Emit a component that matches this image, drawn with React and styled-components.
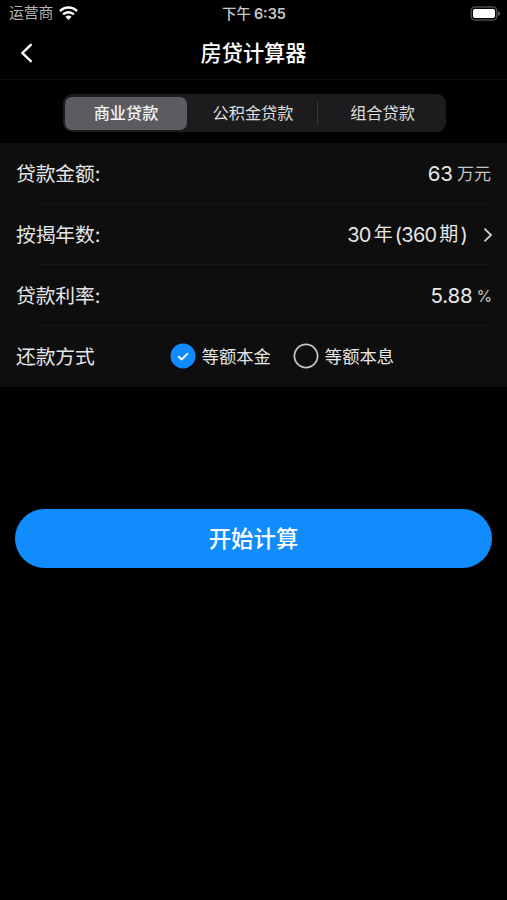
import React, { useState } from 'react'
import styled, { createGlobalStyle } from 'styled-components'

const GlobalStyle = createGlobalStyle`
  * {
    box-sizing: border-box;
  }

  body {
    margin: 0;
    background: #000;
    color: #e6e6e6;
    font-family: Inter, 'Noto Sans CJK SC', sans-serif;
  }

  button {
    margin: 0;
    padding: 0;
    border: none;
    background: none;
    color: inherit;
    font-family: inherit;
  }
`

const Screen = styled.div`
  height: 900px;
  background: #000;
  white-space: nowrap;
  overflow: hidden;
`

const StatusBar = styled.div`
  display: grid;
  grid-template-columns: 1fr auto 1fr;
  align-items: center;
  height: 27px;
  padding: 0 6px 0 9px;
`

const Carrier = styled.div`
  display: flex;
  align-items: center;
  gap: 6px;
  font-size: 14.8px;
  line-height: 27px;
  color: #b4b4b4;
`

const Clock = styled.div`
  display: flex;
  align-items: center;
  gap: 3px;
  margin-right: 2px;
  font-size: 14.4px;
  font-weight: 600;
  line-height: 27px;
  color: #c8c8c8;

  .period {
    font-weight: 500;
  }
`

const Battery = styled.svg`
  justify-self: end;
`

const NavBar = styled.div`
  display: grid;
  grid-template-columns: 1fr auto 1fr;
  align-items: center;
  height: 53px;
  padding: 0 20px;
  border-bottom: 1px solid #0d0d0d;
`

const BackButton = styled.button`
  display: flex;
  justify-self: start;
  padding-bottom: 1px;
`

const Title = styled.h1`
  margin: 0;
  font-size: 21.2px;
  font-weight: 500;
  line-height: 52px;
  color: #fff;
`

const Segments = styled.div`
  display: grid;
  grid-template-columns: 122px 129px 127px;
  justify-content: space-between;
  align-items: center;
  width: 383px;
  height: 38px;
  margin: 14px auto 11px 63px;
  padding: 2px 0 2px 2px;
  border-radius: 9px;
  background: #1c1c1e;
`

const Segment = styled.button`
  height: ${({ $active }) => ($active ? '33px' : '22px')};
  border-radius: ${({ $active }) => ($active ? '7px' : '0')};
  background: ${({ $active }) => ($active ? '#5b5b60' : 'transparent')};
  box-shadow: ${({ $divider }) => ($divider ? 'inset -1px 0 #39393b' : 'none')};
  color: ${({ $active }) => ($active ? '#f4f4f4' : '#dedede')};
  font-size: 16.2px;
  font-weight: ${({ $active }) => ($active ? 500 : 400)};
  line-height: 22px;
`

const Form = styled.div`
  background: #0e0e0e;
`

const Row = styled.div`
  display: flex;
  align-items: center;
  justify-content: space-between;
  height: 61px;
  padding: 0 16px 2px;

  &:not(:last-child) {
    background: linear-gradient(#171717, #171717) 36px 100% / 456px 1px no-repeat;
  }
`

const Label = styled.span`
  font-size: 19.8px;
  letter-spacing: -0.1px;
`

const Value = styled.div`
  display: flex;
  align-items: center;
  gap: 4px;
  font-size: 20.5px;
  line-height: 30px;
  padding-top: 3px;
`

const Term = styled(Value)`
  gap: 3px;
  font-size: 20px;
  letter-spacing: -0.8px;
`

const Rate = styled(Value)`
  margin-right: -1px;
  letter-spacing: -0.2px;
`

const Unit = styled.span`
  font-size: ${({ $size }) => $size || 17}px;
  line-height: 32px;
  color: ${({ $bright }) => ($bright ? '#e6e6e6' : '#c4c4c4')};
`

const Chevron = styled.svg`
  margin-left: 13px;
  margin-right: -2px;
`

const Options = styled.div`
  display: flex;
  gap: 22px;
  margin-right: 97px;
`

const Option = styled.button`
  display: flex;
  align-items: center;
  gap: 6px;
  font-size: 17.3px;
`

const Submit = styled.button`
  display: block;
  width: 477px;
  height: 59px;
  margin: 122px auto 0;
  padding-bottom: 3px;
  border-radius: 30px;
  background: #118cff;
  color: #fff;
  font-size: 22.4px;
  font-weight: 500;
`

const WifiIcon = () => (
  <svg width="19" height="15" viewBox="0 0 19 15" fill="none" stroke="#fff" strokeWidth="2.5">
    <path d="M1 5.1a12.1 12.1 0 0 1 17 0" />
    <path d="M4.1 8.4a7.7 7.7 0 0 1 10.8 0" />
    <path d="M6.4 10.8a4.4 4.4 0 0 1 6.2 0L9.5 14z" fill="#fff" stroke="none" />
  </svg>
)

const RadioIcon = ({ checked }) => (
  <svg width="26" height="26" viewBox="0 0 26 26" fill="none">
    {checked ? (
      <>
        <circle cx="13" cy="13" r="12.5" fill="#118cff" />
        <path d="M8.3 13.2l3.4 3.3 6.2-6.2" stroke="#fff" strokeWidth="1.9" />
      </>
    ) : (
      <circle cx="13" cy="13" r="11.6" stroke="#c8c8c8" strokeWidth="1.7" />
    )}
  </svg>
)

const loanTypes = ['商业贷款', '公积金贷款', '组合贷款']
const methods = ['等额本金', '等额本息']

const App = () => {
  const [type, setType] = useState(0)
  const [method, setMethod] = useState(0)

  return (
    <Screen>
      <GlobalStyle />
      <StatusBar>
        <Carrier>
          运营商
          <WifiIcon />
        </Carrier>
        <Clock>
          <span className="period">下午</span>
          <span>6:35</span>
        </Clock>
        <Battery width="31" height="15" viewBox="0 0 31 15" fill="none">
          <rect x="1.2" y="1" width="25.6" height="13" rx="3.8" stroke="#4c4c4c" strokeWidth="1.4" />
          <rect x="3" y="3" width="22" height="9" rx="1.8" fill="#fff" />
          <path d="M28.2 5.2c2.6.9 2.6 3.9 0 4.8z" fill="#666" />
        </Battery>
      </StatusBar>

      <NavBar>
        <BackButton aria-label="返回">
          <svg width="13" height="20" viewBox="0 0 13 20" fill="none" stroke="#fff" strokeWidth="2.4" strokeLinecap="round">
            <path d="M10.8 1.8L2.4 10l8.4 8.2" />
          </svg>
        </BackButton>
        <Title>房贷计算器</Title>
      </NavBar>

      <Segments>
        {loanTypes.map((el, index) => (
          <Segment
            key={el}
            $active={type === index}
            $divider={index < 2 && type !== index && type !== index + 1}
            onClick={() => setType(index)}
          >
            {el}
          </Segment>
        ))}
      </Segments>

      <Form>
        <Row>
          <Label>贷款金额:</Label>
          <Value>
            <span>63</span>
            <Unit>万元</Unit>
          </Value>
        </Row>
        <Row>
          <Label>按揭年数:</Label>
          <Term>
            <span>30</span>
            <Unit $size={19} $bright>年</Unit>
            <span>(360</span>
            <Unit $size={19} $bright>期</Unit>
            <span>)</span>
            <Chevron width="10" height="16" viewBox="0 0 10 16" fill="none" stroke="#d0d0d0" strokeWidth="1.8">
              <path d="M1.5 1.7L8 8l-6.5 6.3" />
            </Chevron>
          </Term>
        </Row>
        <Row>
          <Label>贷款利率:</Label>
          <Rate>
            <span>5.88</span>
            <Unit $size={16}>%</Unit>
          </Rate>
        </Row>
        <Row>
          <Label>还款方式</Label>
          <Options>
            {methods.map((el, index) => (
              <Option key={el} onClick={() => setMethod(index)}>
                <RadioIcon checked={method === index} />
                {el}
              </Option>
            ))}
          </Options>
        </Row>
      </Form>

      <Submit>开始计算</Submit>
    </Screen>
  )
}

export default App
